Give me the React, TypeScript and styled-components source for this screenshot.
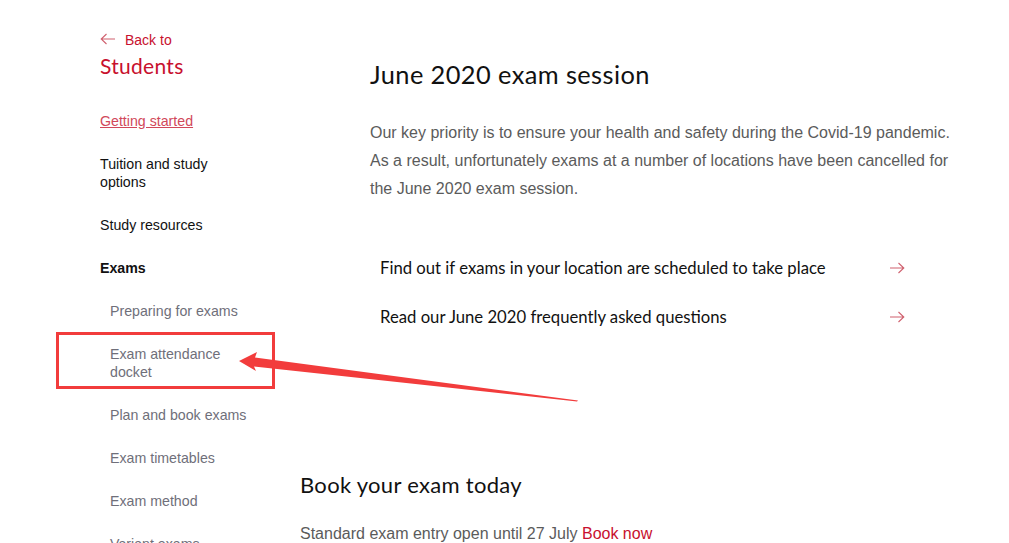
import styled, { createGlobalStyle } from 'styled-components';

const GlobalStyle = createGlobalStyle`
  html, body {
    margin: 0;
    padding: 0;
    background: #ffffff;
  }
  body {
    font-family: "Liberation Sans", Arial, sans-serif;
  }
`;

const RED = '#c8102e';

type NavItem = { label: string; kind: 'link' | 'plain' | 'bold' | 'sub' };

const navItems: NavItem[] = [
  { label: 'Getting started', kind: 'link' },
  { label: 'Tuition and study options', kind: 'plain' },
  { label: 'Study resources', kind: 'plain' },
  { label: 'Exams', kind: 'bold' },
  { label: 'Preparing for exams', kind: 'sub' },
  { label: 'Exam attendance docket', kind: 'sub' },
  { label: 'Plan and book exams', kind: 'sub' },
  { label: 'Exam timetables', kind: 'sub' },
  { label: 'Exam method', kind: 'sub' },
  { label: 'Variant exams', kind: 'sub' },
];

const links = [
  'Find out if exams in your location are scheduled to take place',
  'Read our June 2020 frequently asked questions',
];

function ThinArrow({ left }: { left?: boolean }) {
  return (
    <svg width="16" height="12" viewBox="0 0 16 12" style={left ? { transform: 'scaleX(-1)' } : undefined}>
      <path d="M1 6 H14.5 M9.5 1 L14.8 6 L9.5 11" fill="none" stroke="currentColor" strokeWidth="1.1" />
    </svg>
  );
}

function App() {
  return (
    <Page>
      <GlobalStyle />
      <Sidebar>
        <BackLink>
          <ThinArrow left />
          <span>Back to</span>
        </BackLink>
        <SectionTitle>Students</SectionTitle>
        <Nav>
          {navItems.map((item) => (
            <NavLink key={item.label} $kind={item.kind}>
              {item.label}
            </NavLink>
          ))}
        </Nav>
      </Sidebar>

      <Main>
        <Session>
          <Heading>June 2020 exam session</Heading>
          <Paragraph>
            Our key priority is to ensure your health and safety during the Covid-19 pandemic. As a result,
            unfortunately exams at a number of locations have been cancelled for the June 2020 exam session.
          </Paragraph>
          <LinkList>
            {links.map((l) => (
              <LinkRow key={l}>
                <span>{l}</span>
                <ArrowWrap>
                  <ThinArrow />
                </ArrowWrap>
              </LinkRow>
            ))}
          </LinkList>
        </Session>

        <Book>
          <BookHeading>Book your exam today</BookHeading>
          <BookText>
            Standard exam entry open until 27 July <RedLink>Book now</RedLink>
          </BookText>
        </Book>
      </Main>

      <HighlightBox />
      <Annotation width="1009" height="543" viewBox="0 0 1009 543">
        <polygon
          points="239,361 257,352 255,357.5 578,400.5 577,401.5 254,366.5 256,371"
          fill="#f23c3c"
        />
      </Annotation>
    </Page>
  );
}

export default App;

const Page = styled.div`
  position: relative;
  display: flex;
  width: 1009px;
  height: 543px;
  overflow: hidden;
  background: #fff;
`;

const Sidebar = styled.aside`
  width: 200px;
  flex-shrink: 0;
  padding: 31px 0 0 100px;
  box-sizing: content-box;
`;

const BackLink = styled.div`
  display: flex;
  align-items: center;
  gap: 9px;
  color: ${RED};
  font-size: 14px;
  line-height: 18px;

  svg {
    color: #d0606e;
    margin-top: -2px;
  }
`;

const SectionTitle = styled.h2`
  margin: 4px 0 0;
  font-family: Lato, "Open Sans", sans-serif;
  font-weight: 400;
  font-size: 21px;
  line-height: 26px;
  letter-spacing: 0.3px;
  color: ${RED};
`;

const Nav = styled.nav`
  display: flex;
  flex-direction: column;
  gap: 25px;
  width: 150px;
  margin-top: 33px;
`;

const NavLink = styled.div<{ $kind: NavItem['kind'] }>`
  font-size: 14.2px;
  line-height: 18px;
  color: ${(p) => (p.$kind === 'link' ? '#d1485a' : p.$kind === 'sub' ? '#6f6f7a' : '#111')};
  font-weight: ${(p) => (p.$kind === 'bold' ? 700 : 400)};
  text-decoration: ${(p) => (p.$kind === 'link' ? 'underline' : 'none')};
  padding-left: ${(p) => (p.$kind === 'sub' ? '10px' : '0')};
`;

const Main = styled.main`
  flex: 1;
  display: flex;
  flex-direction: column;
  padding-top: 59px;
`;

const Session = styled.section`
  padding-left: 70px;
  width: 580px;
`;

const Heading = styled.h1`
  margin: 0;
  font-family: Lato, "Open Sans", sans-serif;
  font-weight: 400;
  font-size: 25.4px;
  line-height: 30px;
  letter-spacing: 0.4px;
  color: #111;
`;

const Paragraph = styled.p`
  margin: 30px 0 0;
  font-size: 16px;
  line-height: 28px;
  color: #5b5b5b;
`;

const LinkList = styled.div`
  display: flex;
  flex-direction: column;
  margin-top: 40px;
  width: 545px;
`;

const LinkRow = styled.div`
  display: flex;
  align-items: center;
  justify-content: space-between;
  height: 49px;
  padding: 0 10px;
  font-family: Lato, "Open Sans", sans-serif;
  font-size: 16.7px;
  color: #111;
`;

const ArrowWrap = styled.span`
  display: flex;
  color: #d0606e;
`;

const Book = styled.section`
  margin-top: 130px;
`;

const BookHeading = styled.h2`
  margin: 0;
  font-family: Lato, "Open Sans", sans-serif;
  font-weight: 400;
  font-size: 22px;
  line-height: 28px;
  letter-spacing: 0.3px;
  color: #111;
`;

const BookText = styled.p`
  margin: 21px 0 0;
  font-size: 16px;
  line-height: 28px;
  color: #5b5b5b;
`;

const RedLink = styled.span`
  color: ${RED};
`;

const HighlightBox = styled.div`
  position: absolute;
  left: 56px;
  top: 332px;
  width: 213px;
  height: 51px;
  border: 3px solid #f23c3c;
  pointer-events: none;
`;

const Annotation = styled.svg`
  position: absolute;
  left: 0;
  top: 0;
  pointer-events: none;
`;
